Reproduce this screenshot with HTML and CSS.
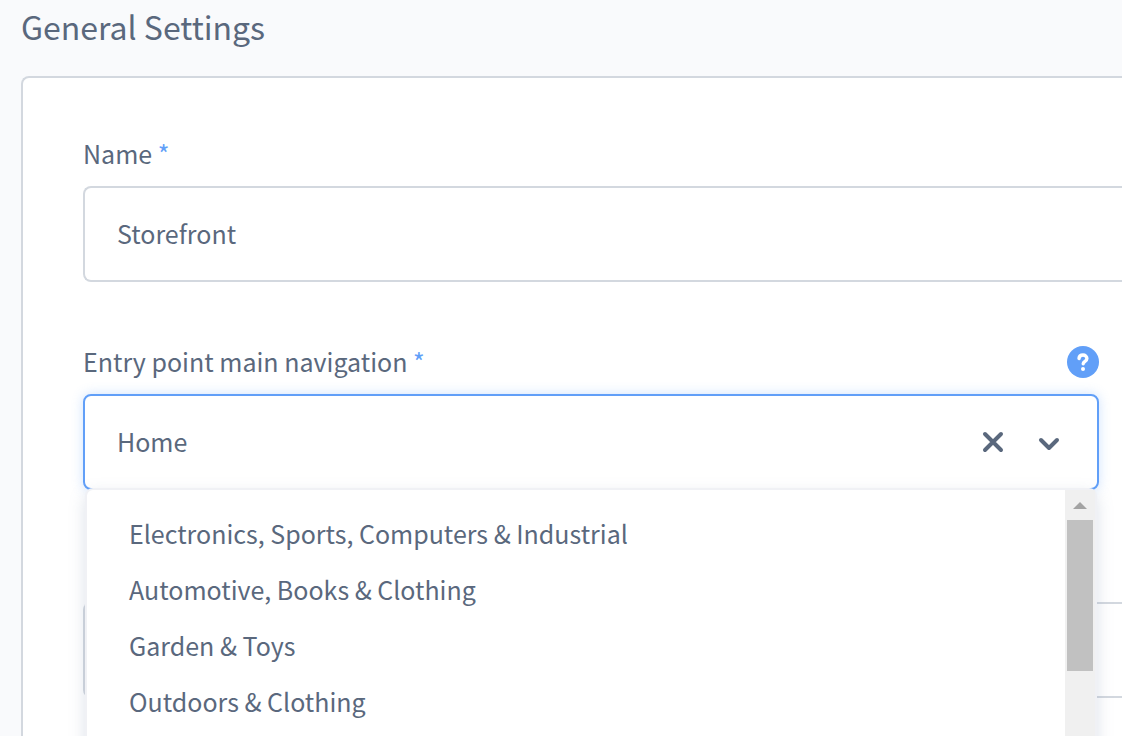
FILE: index.html
```html
<!DOCTYPE html>
<html lang="en">
<head>
    <meta charset="UTF-8">
    <meta name="viewport" content="width=device-width, initial-scale=1.0">
    <title>General Settings</title>
    <link rel="stylesheet" href="styles.css">
</head>
<body>
<h1>General Settings</h1>
<form class="card">
    <div class="field">
        <div class="field-label">
            <label for="name">Name <span class="required">*</span></label>
        </div>
        <input type="text" class="text-input" id="name" value="Storefront">
    </div>

    <div class="field field-half">
        <div class="field-label">
            <label for="entry-point">Entry point main navigation <span class="required">*</span></label>
            <button type="button" class="help" aria-label="Help">
                <svg viewBox="0 0 32 32" width="32" height="32">
                    <circle cx="16" cy="16" r="16" fill="#619ff8"/>
                    <path d="M12 12.500c.2-2.300 1.900-3.500 4-3.500s3.900 1.400 3.900 3.400c0 2.900-3.700 2.800-3.700 5.400" fill="none" stroke="#fff" stroke-width="3.400" stroke-linecap="round"/>
                    <circle cx="16" cy="23" r="2" fill="#fff"/>
                </svg>
            </button>
        </div>
        <div class="select">
            <input type="text" class="select-input" id="entry-point" value="Home" role="combobox" aria-expanded="true" aria-controls="entry-list">
            <button type="button" class="icon-button" aria-label="Clear">
                <svg viewBox="0 0 24 24" width="24" height="24">
                    <path d="M4 4l16 16M20 4L4 20"/>
                </svg>
            </button>
            <button type="button" class="icon-button" aria-label="Toggle list">
                <svg viewBox="0 0 24 24" width="24" height="24">
                    <path d="M4 10l8 8 8-8"/>
                </svg>
            </button>
            <div class="dropdown">
                <ul class="options" id="entry-list" role="listbox">
                    <li role="option">Electronics, Sports, Computers &amp; Industrial</li>
                    <li role="option">Automotive, Books &amp; Clothing</li>
                    <li role="option">Garden &amp; Toys</li>
                    <li role="option">Outdoors &amp; Clothing</li>
                </ul>
                <div class="scrollbar">
                    <div class="scroll-arrow"></div>
                    <div class="scroll-thumb"></div>
                </div>
            </div>
        </div>
    </div>

    <div class="field">
        <div class="field-label"></div>
        <input type="text" class="text-input" aria-label="Entry point footer navigation">
    </div>
</form>
</body>
</html>
```
FILE: styles.css
```css
* {
    box-sizing: border-box;
}

body {
    margin: 0;
    height: 100vh;
    overflow: hidden;
    background-color: #f9fafc;
    color: #5a687d;
    font-family: "Noto Sans CJK SC", "Open Sans", sans-serif;
    font-size: 25px;
    line-height: 36px;
}

h1 {
    margin: 0 0 24px 21px;
    font-size: 32px;
    font-weight: 400;
    line-height: 52px;
}

/* the card runs on past the right edge of the window */
.card {
    display: flex;
    flex-direction: column;
    gap: 60px;
    margin-left: 21px;
    padding: 56px 0 56px 60px;
    background: #fff;
    border: 2px solid #d3d8df;
    border-right: none;
    border-radius: 8px 0 0 8px;
}

.field-half {
    margin-right: 23px;
}

.field-label {
    display: flex;
    justify-content: space-between;
    height: 36px;
    margin-bottom: 16px;
}

.help {
    align-self: flex-end;
}

.required {
    color: #619ff8;
}

button {
    display: flex;
    padding: 0;
    border: none;
    background: none;
    cursor: pointer;
}

label {
    line-height: 38px;
}

input {
    font: inherit;
    color: inherit;
    outline: none;
}

.text-input {
    display: block;
    width: 100%;
    height: 96px;
    padding: 0 32px 2px;
    background: #fff;
    border: 2px solid #d3d8df;
    border-right: none;
    border-radius: 8px 0 0 8px;
}

.select {
    position: relative;
    display: flex;
    align-items: center;
    gap: 32px;
    height: 96px;
    padding: 0 36px 0 32px;
    background: #fff;
    border: 2px solid #619ff8;
    border-radius: 8px;
    box-shadow: 0 0 12px rgba(97, 159, 248, 0.3);
}

.select-input {
    flex: 1;
    min-width: 0;
    padding: 0 0 2px;
    border: none;
    background: none;
}

.icon-button path {
    fill: none;
    stroke: #5a687d;
    stroke-width: 4;
    stroke-linecap: round;
    stroke-linejoin: round;
}

.dropdown {
    position: absolute;
    top: 92px;
    left: 0;
    right: 0;
    z-index: 1;
    display: flex;
    height: 500px;
    background: #fff;
    border: 2px solid #f0f1f5;
    border-radius: 8px;
    box-shadow: 0 6px 16px rgba(120, 138, 170, 0.25);
}

.options {
    flex: 1;
    margin: 0;
    padding: 15px 0;
    list-style: none;
}

.options li {
    padding: 10px 42px;
}

.scrollbar {
    width: 30px;
    padding: 12px 2px 0;
    background: #f0f0f0;
}

.scroll-arrow {
    width: 14px;
    height: 7px;
    margin: 0 auto 11px;
    background: #a3a3a3;
    clip-path: polygon(50% 0, 100% 100%, 0 100%);
}

.scroll-thumb {
    height: 151px;
    background: #c1c1c1;
}
```
